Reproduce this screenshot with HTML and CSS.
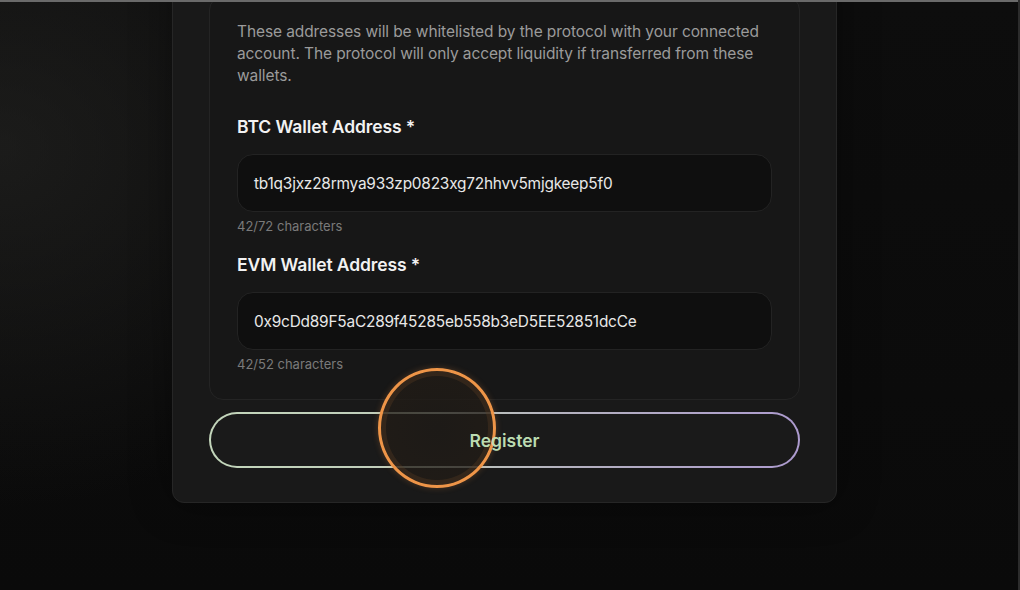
FILE: index.html
```html
<!DOCTYPE html>
<html lang="en">
<head>
<meta charset="utf-8">
<title>Register wallets</title>
<link rel="stylesheet" href="styles.css">
</head>
<body>
<div class="topline"></div>
<main class="stage">
  <section class="card">
    <div class="panel">
      <p class="intro">These addresses will be whitelisted by the protocol with your connected account. The protocol will only accept liquidity if transferred from these wallets.</p>
      <div class="field">
        <label class="label">BTC Wallet Address *</label>
        <div class="input">tb1q3jxz28rmya933zp0823xg72hhvv5mjgkeep5f0</div>
        <div class="count">42/72 characters</div>
      </div>
      <div class="field">
        <label class="label">EVM Wallet Address *</label>
        <div class="input">0x9cDd89F5aC289f45285eb558b3eD5EE52851dcCe</div>
        <div class="count">42/52 characters</div>
      </div>
    </div>
    <div class="btn-wrap">
      <button class="register"><span class="register-text">Register</span></button>
      <span class="touch"></span>
    </div>
  </section>
</main>
</body>
</html>
```
FILE: styles.css
```css
* { box-sizing: border-box; }
html, body { margin: 0; padding: 0; }
body {
  width: 1020px;
  height: 590px;
  overflow: hidden;
  background:
    radial-gradient(ellipse 420px 360px at 0% 25%, rgba(40,40,38,0.55), rgba(0,0,0,0) 100%),
    linear-gradient(180deg, #0d0d0d 0%, #0a0a0a 100%);
  font-family: Inter, "Noto Sans", sans-serif;
  color: #fff;
  position: relative;
  border-right: 2px solid #2c2c2c;
}
.topline {
  height: 2px;
  background: #6a6a6a;
  position: relative;
  z-index: 3;
}
.stage {
  display: flex;
  justify-content: center;
  padding-right: 9px;
}
.card {
  width: 665px;
  margin-top: -43px;
  padding: 36px 36px 34px;
  background: #191919;
  border: 1px solid #262626;
  border-radius: 12px;
  display: flex;
  flex-direction: column;
  gap: 12px;
  box-shadow: 0 0 40px rgba(0,0,0,0.4);
}
.panel {
  background: #171717;
  border: 1px solid #242424;
  border-radius: 14px;
  padding: 24px 27px 27px;
  display: flex;
  flex-direction: column;
}
.intro {
  margin: 0 0 28px;
  font-size: 15.5px;
  line-height: 22px;
  color: #9b9b9b;
  letter-spacing: -0.1px;
}
.field {
  display: flex;
  flex-direction: column;
}
.field + .field { margin-top: 19px; }
.label {
  font-size: 17.5px;
  line-height: 24px;
  font-weight: 600;
  color: #f2f2f2;
  margin-bottom: 15px;
  letter-spacing: -0.1px;
}
.input {
  height: 58px;
  border-radius: 16px;
  background: #0f0f0f;
  border: 1px solid #232323;
  padding: 0 16px;
  display: flex;
  align-items: center;
  font-size: 15.4px;
  color: #e8e8e8;
  letter-spacing: -0.2px;
}
.count {
  margin-top: 6px;
  font-size: 13px;
  line-height: 16px;
  color: #7a7a7a;
}
.btn-wrap {
  position: relative;
}
.register {
  width: 100%;
  height: 56px;
  border-radius: 28px;
  border: 2px solid transparent;
  background:
    linear-gradient(#1a1a1a, #1a1a1a) padding-box,
    linear-gradient(90deg, #c3d6bb 0%, #c0ccbb 35%, #b4b2bf 60%, #ad9bcf 100%) border-box;
  font-family: Inter, "Noto Sans", sans-serif;
  font-size: 17.5px;
  font-weight: 600;
  color: #bcdcb2;
  cursor: pointer;
  padding: 0;
}
.register-text {
  position: relative;
  z-index: 2;
}
.touch {
  position: absolute;
  z-index: 1;
  left: 169px;
  top: -44px;
  width: 118px;
  height: 120px;
  border-radius: 50%;
  border: 3px solid #ee9548;
  background: radial-gradient(circle, rgba(30,26,22,0.72) 0%, rgba(34,28,22,0.78) 80%, rgba(60,40,22,0.8) 100%);
  box-shadow: inset 0 0 0 5px rgba(90,60,35,0.35), 0 0 6px rgba(238,149,72,0.25);
}
```
